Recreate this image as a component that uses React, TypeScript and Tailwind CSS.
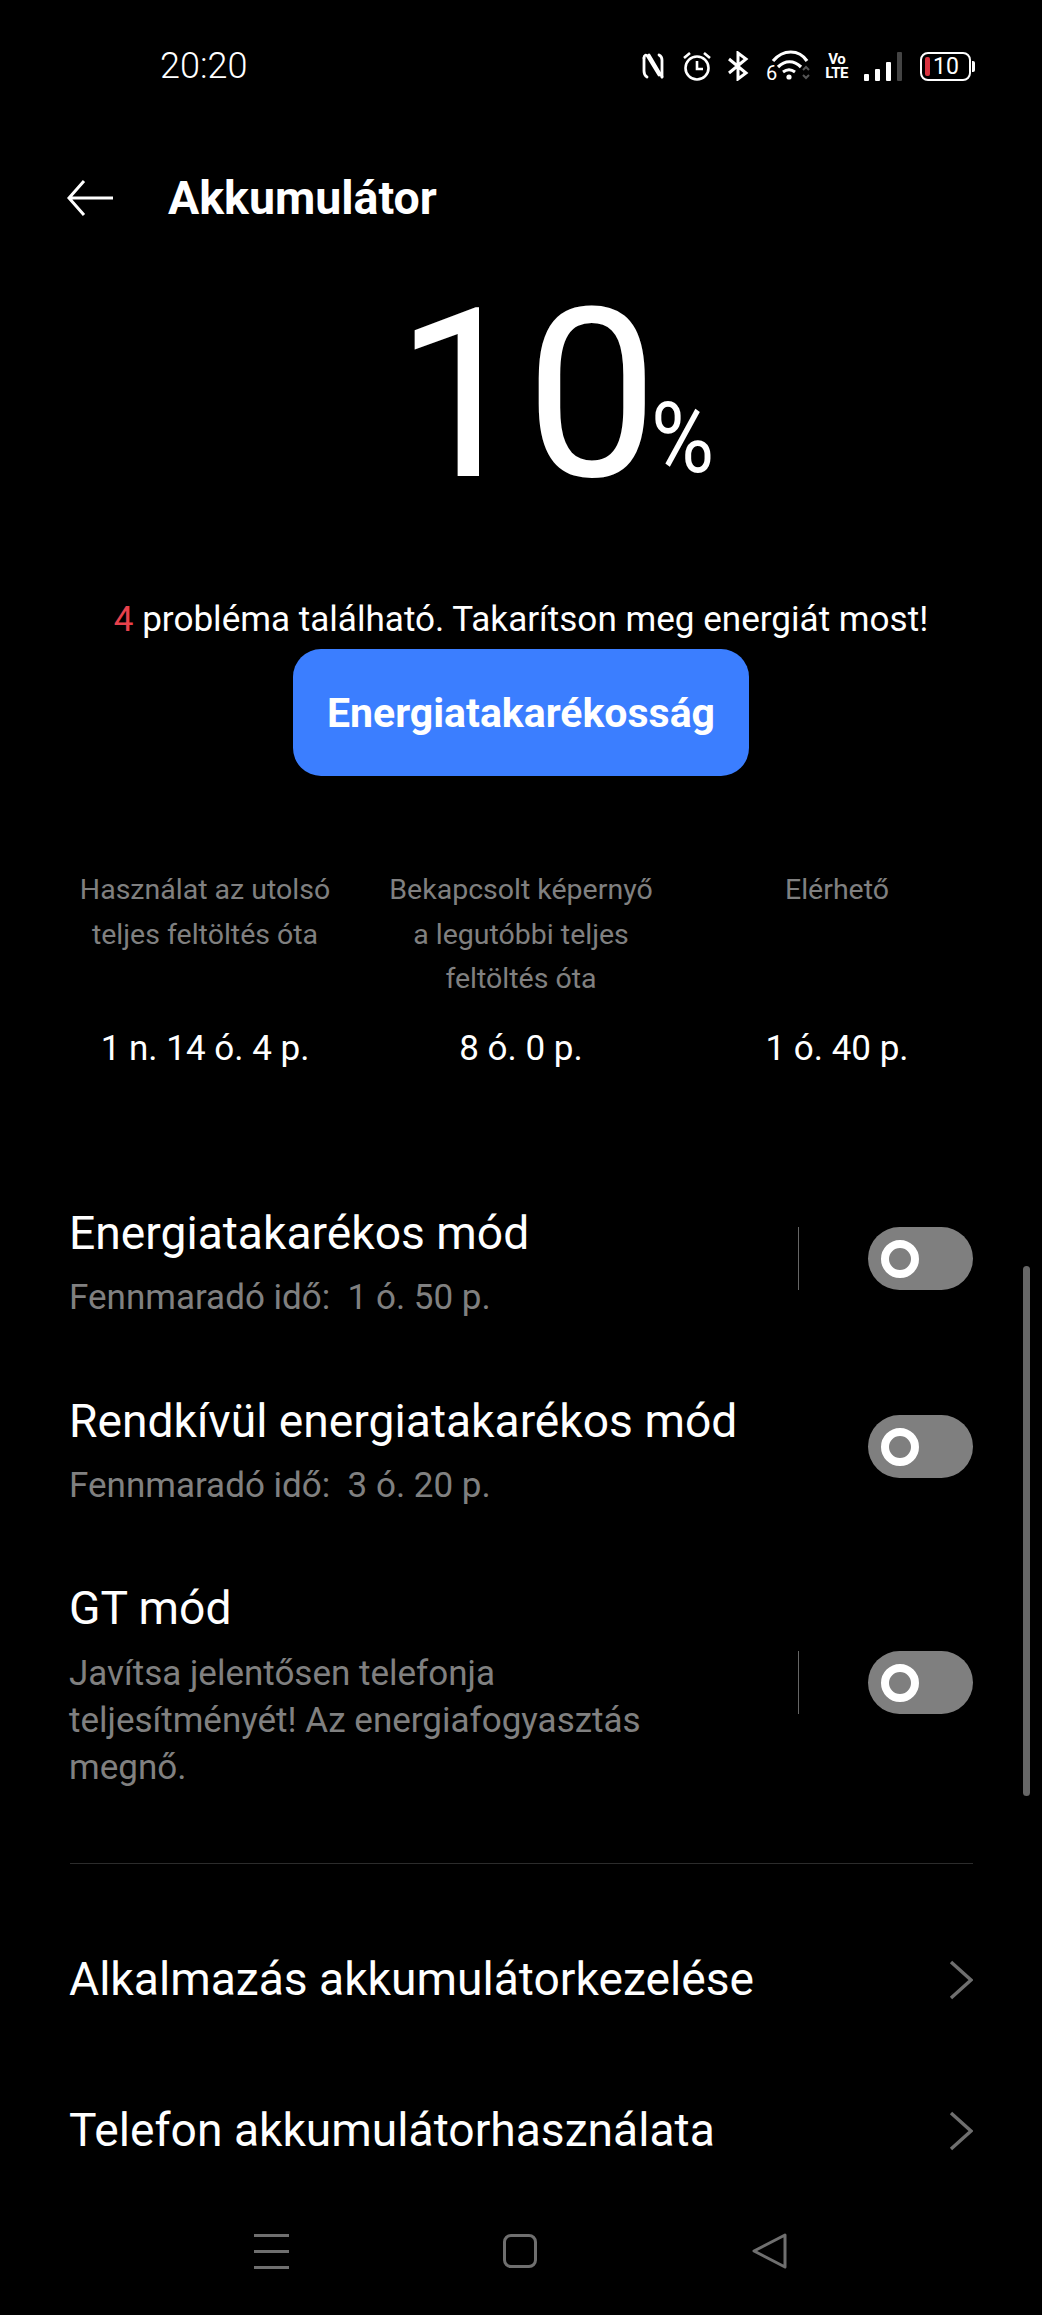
import { useState } from 'react';

const stats = [
  { label: 'Használat az utolsó teljes feltöltés óta', value: '1 n. 14 ó. 4 p.', width: 'w-[270px]' },
  { label: 'Bekapcsolt képernyő a legutóbbi teljes feltöltés óta', value: '8 ó. 0 p.', width: 'w-[280px]' },
  { label: 'Elérhető', value: '1 ó. 40 p.', width: 'w-[270px]' },
];

function StatusIcons() {
  return (
    <div className="mt-[-1px] flex items-center">
      <svg width="24" height="30" viewBox="0 0 24 30" fill="none" stroke="white" strokeWidth="2.8" strokeLinecap="round">
        <path d="M3 7c0-3 2-4 4-1l11 18" />
        <path d="M3 7v13c0 3 1 5 3 6" />
        <path d="M21 26V9c0-3-1-4-3-5" />
        <path d="M8 4l10 17c1 2 3 3 3 5" />
      </svg>
      <svg width="30" height="32" viewBox="0 0 30 32" fill="none" stroke="white" strokeWidth="2.6" className="ml-[17px]">
        <circle cx="15" cy="18" r="11.5" />
        <path d="M15 11v8h6" />
        <path d="M2 8l6-5M28 8l-6-5" />
      </svg>
      <svg width="22" height="30" viewBox="0 0 22 30" fill="none" stroke="white" strokeWidth="3" className="ml-[15px]">
        <path d="M2 8l17 14-8 6V2l8 6L2 22" />
      </svg>
      <svg width="46" height="36" viewBox="0 0 46 36" fill="none" className="mt-[4px] ml-[16px]">
        <path d="M8 11c10-12 26-12 34 0" stroke="white" strokeWidth="3.2" />
        <path d="M13 17c7-7 16-7 23 0" stroke="white" strokeWidth="3.2" />
        <path d="M18 22c4-3 8-3 12 0" stroke="white" strokeWidth="3" />
        <circle cx="24" cy="27" r="2.6" fill="white" />
        <text x="1" y="30" fill="white" fontSize="20" fontFamily="Roboto, sans-serif">6</text>
        <path d="M38 20l3-3 3 3M38 25l3 3 3-3" stroke="#555" strokeWidth="2" />
      </svg>
      <div className="ml-[14px] flex flex-col items-center font-[Roboto] text-[15px] leading-[14px] font-bold tracking-[-0.5px] text-white">
        <span>Vo</span>
        <span>LTE</span>
      </div>
      <div className="ml-[16px] flex h-[30px] items-end gap-[6px]">
        <div className="h-[7px] w-[5px] rounded-[1px] bg-white" />
        <div className="h-[12px] w-[5px] rounded-[1px] bg-white" />
        <div className="h-[19px] w-[5px] rounded-[1px] bg-white" />
        <div className="h-[29px] w-[5px] rounded-[1px] bg-[#444]" />
      </div>
      <div className="ml-[18px] flex items-center">
        <div className="flex h-[29px] w-[51px] items-center rounded-[8px] border-[2.5px] border-white pl-[3px]">
          <div className="h-[19px] w-[5px] rounded-[2px] bg-[#d8323f]" />
          <span className="ml-[3px] font-[Roboto] text-[23px] leading-none text-white">10</span>
        </div>
        <div className="ml-[1px] h-[11px] w-[3px] rounded-r-[2px] bg-white" />
      </div>
    </div>
  );
}

function Toggle() {
  const [on, setOn] = useState(false);
  return (
    <button
      onClick={() => setOn(!on)}
      className={`flex h-[63px] w-[105px] shrink-0 items-center rounded-full bg-[#7f7f7f] pl-[13px] ${on ? 'justify-end pr-[13px]' : ''}`}
    >
      <span className="size-[38px] rounded-full border-[8px] border-white" />
    </button>
  );
}

function Chevron() {
  return (
    <svg width="24" height="40" viewBox="0 0 24 40" fill="none" stroke="#6f6f6f" strokeWidth="3.4">
      <path d="M2 2l20 18L2 38" />
    </svg>
  );
}

export default function App() {
  return (
    <div className="relative h-[2315px] w-[1042px] overflow-hidden bg-black font-[Roboto,sans-serif] text-white">
      {/* status bar */}
      <div className="flex h-[163px] items-start justify-between pt-[47px] pr-[67px] pl-[160px]">
        <span className="text-[36px] leading-[38px] font-light">20:20</span>
        <StatusIcons />
      </div>

      {/* header */}
      <div className="flex h-[70px] items-center pl-[66px]">
        <svg width="48" height="38" viewBox="0 0 48 38" fill="none" stroke="white" strokeWidth="3">
          <path d="M47 19H3M18 2L3 19l15 17" />
        </svg>
        <h1 className="ml-[54px] text-[46.5px] leading-none font-bold">Akkumulátor</h1>
      </div>

      {/* percent */}
      <div className="mt-[53px] flex h-[220px] items-end justify-center pl-[76px]">
        <span className="text-[236px] leading-[220px] font-normal tracking-[-2px]">10</span>
        <span className="mb-[27px] ml-[-5px] origin-left scale-x-[0.88] text-[98px] leading-[80px] font-normal">%</span>
      </div>

      <p className="mt-[91px] text-center text-[35.1px] leading-[44px]">
        <span className="text-[#e8414c]">4</span> probléma található. Takarítson meg energiát most!
      </p>

      <div className="mt-[8px] flex justify-center">
        <button className="flex h-[127px] w-[456px] items-center justify-center rounded-[28px] bg-[#3b7eff] pt-[3px] text-[41px] font-bold">
          Energiatakarékosság
        </button>
      </div>

      {/* stats */}
      <div className="mt-[92px] grid grid-cols-3 px-[47px]">
        {stats.map((s) => (
          <div key={s.value} className="flex flex-col items-center text-center">
            <p className={`h-[133px] ${s.width} text-[28.5px] leading-[44.5px] text-[#808080]`}>{s.label}</p>
            <p className="mt-[26px] text-[35px] leading-[44px]">{s.value}</p>
          </div>
        ))}
      </div>

      {/* settings rows */}
      <div className="mt-[135px] flex h-[125px] items-start pr-[69px] pl-[69px]">
        <div className="flex-1">
          <p className="text-[46.2px] leading-[54px]">Energiatakarékos mód</p>
          <p className="mt-[15px] text-[35px] leading-[46px] text-[#808080]">Fennmaradó idő:&nbsp; 1 ó. 50 p.</p>
        </div>
        <div className="mt-[21px] mr-[69px] h-[63px] w-px bg-[#666]" />
        <div className="mt-[21px]"><Toggle /></div>
      </div>
      <div className="mt-[63px] flex h-[125px] items-start pr-[69px] pl-[69px]">
        <div className="flex-1">
          <p className="text-[46.2px] leading-[54px]">Rendkívül energiatakarékos mód</p>
          <p className="mt-[15px] text-[35px] leading-[46px] text-[#808080]">Fennmaradó idő:&nbsp; 3 ó. 20 p.</p>
        </div>
        <div className="mt-[21px]"><Toggle /></div>
      </div>
      <div className="mt-[62px] flex h-[190px] items-start pr-[69px] pl-[69px]">
        <div className="flex-1">
          <p className="text-[46.2px] leading-[54px]">GT mód</p>
          <p className="mt-[15px] w-[620px] text-[35px] leading-[47px] text-[#808080]">
            Javítsa jelentősen telefonja teljesítményét! Az energiafogyasztás megnő.
          </p>
        </div>
        <div className="mt-[70px] mr-[69px] h-[63px] w-px bg-[#666]" />
        <div className="mt-[70px]"><Toggle /></div>
      </div>

      <div className="mt-[92px] mr-[69px] ml-[70px] h-px bg-[#2c2c2c]" />

      <div className="mt-[87px] flex h-[58px] items-center justify-between pr-[69px] pl-[69px]">
        <span className="text-[46.2px]">Alkalmazás akkumulátorkezelése</span>
        <Chevron />
      </div>
      <div className="mt-[93px] flex h-[58px] items-center justify-between pr-[69px] pl-[69px]">
        <span className="text-[46.2px]">Telefon akkumulátorhasználata</span>
        <Chevron />
      </div>

      {/* nav bar */}
      <div className="mt-[73px] flex items-center pl-[254px]">
        <div className="flex w-[35px] flex-col gap-[13px]">
          <div className="h-[3px] bg-[#6f6f6f]" />
          <div className="h-[3px] bg-[#6f6f6f]" />
          <div className="h-[3px] bg-[#6f6f6f]" />
        </div>
        <div className="ml-[214px] h-[34px] w-[34px] rounded-[8px] border-[3px] border-[#6f6f6f]" />
        <svg width="36" height="36" viewBox="0 0 36 36" fill="none" stroke="#6f6f6f" strokeWidth="3" strokeLinejoin="round" className="ml-[215px]">
          <path d="M33 2L2 18l31 16z" />
        </svg>
      </div>

      {/* scroll indicator overlay */}
      <div className="absolute top-[1266px] left-[1023px] h-[530px] w-[7px] rounded-full bg-[#666]" />
    </div>
  );
}
